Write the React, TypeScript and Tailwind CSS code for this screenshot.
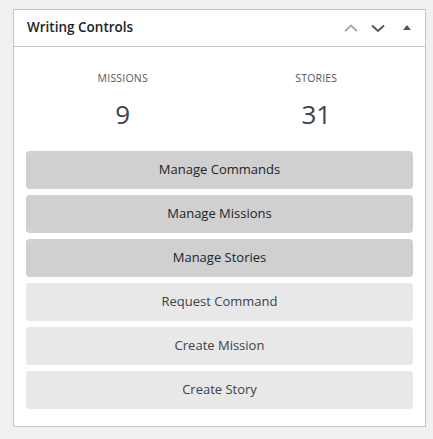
import React from 'react';

const font = { fontFamily: '"Open Sans", "Noto Sans", sans-serif' };

const Stat: React.FC<{ label: string; value: number }> = ({ label, value }) => (
  <div className="flex flex-col items-center">
    <span className="text-[10.5px] tracking-[0.2px] uppercase text-[#50575e] leading-none">{label}</span>
    <span className="mt-[17px] text-[26px] leading-none text-[#3c434a]">{value}</span>
  </div>
);

const primary = ['Manage Commands', 'Manage Missions', 'Manage Stories'];
const secondary = ['Request Command', 'Create Mission', 'Create Story'];

export default function App() {
  return (
    <div className="w-[433px] h-[439px] bg-[#f0f0f1] pt-[9px] pl-[13px]" style={font}>
      <div className="w-[413px] h-[418px] bg-white border border-[#c3c4c7] flex flex-col">
        {/* header */}
        <div className="h-[37px] flex items-center border-b border-[#c3c4c7] pl-[13px] pr-[13px]">
          <h2 className="text-[13.5px] font-semibold text-[#1d2327] flex-1 leading-none">Writing Controls</h2>
          <div className="flex items-center">
            <svg width="16" height="16" viewBox="0 0 16 16" className="mr-[11px]">
              <path d="M2 11 L8 5.5 L14 11" fill="none" stroke="#a7aaad" strokeWidth="2" />
            </svg>
            <svg width="16" height="16" viewBox="0 0 16 16" className="mr-[16px]">
              <path d="M2 5.5 L8 11 L14 5.5" fill="none" stroke="#50575e" strokeWidth="2" />
            </svg>
            <svg width="10" height="8" viewBox="0 0 10 8">
              <path d="M1 6 L5 1 L9 6 Z" fill="#50575e" />
            </svg>
          </div>
        </div>

        {/* body */}
        <div className="px-3 pt-[26px]">
          <div className="grid grid-cols-2">
            <Stat label="Missions" value={9} />
            <Stat label="Stories" value={31} />
          </div>

          <div className="mt-[24px] flex flex-col gap-[6px]">
            {primary.map((t) => (
              <button
                key={t}
                className="h-[38px] w-full rounded-[4px] bg-[#d0d0d0] text-[13px] text-[#1d2327]"
              >
                {t}
              </button>
            ))}
            {secondary.map((t) => (
              <button
                key={t}
                className="h-[38px] w-full rounded-[4px] bg-[#e8e8e8] text-[13px] text-[#3c434a]"
              >
                {t}
              </button>
            ))}
          </div>
        </div>
      </div>
    </div>
  );
}
